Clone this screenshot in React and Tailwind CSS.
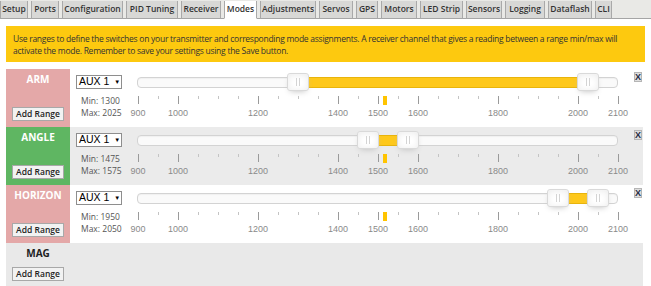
import React from 'react';

const tabs = [
  { name: 'Setup', w: 'w-[28px]' },
  { name: 'Ports', w: 'w-[28px]' },
  { name: 'Configuration', w: 'w-[61px]' },
  { name: 'PID Tuning', w: 'w-[52px]' },
  { name: 'Receiver', w: 'w-[40px]' },
  { name: 'Modes', w: 'w-[33px]', active: true },
  { name: 'Adjustments', w: 'w-[56px]' },
  { name: 'Servos', w: 'w-[34px]' },
  { name: 'GPS', w: 'w-[22px]' },
  { name: 'Motors', w: 'w-[36px]' },
  { name: 'LED Strip', w: 'w-[43px]' },
  { name: 'Sensors', w: 'w-[36px]' },
  { name: 'Logging', w: 'w-[40px]' },
  { name: 'Dataflash', w: 'w-[44px]' },
  { name: 'CLI', w: 'w-[17px]' },
];

const modes = [
  { name: 'ARM', color: 'bg-[#e4a8a8] text-white', rowBg: 'bg-white', min: 1300, max: 2025 },
  { name: 'ANGLE', color: 'bg-[#5fb662] text-white', rowBg: 'bg-[#ebebeb]', min: 1475, max: 1575 },
  { name: 'HORIZON', color: 'bg-[#e4a8a8] text-white', rowBg: 'bg-white', min: 1950, max: 2050 },
];

const majors = [900, 1000, 1200, 1400, 1500, 1600, 1800, 2000, 2100];
const ticks = [];
for (let v = 900; v <= 2100; v += 50) ticks.push(v);

// 900 -> 1px, 0.4px per unit
const pos = v => 1 + (v - 900) * 0.4;

const Handle = ({ value }) => (
  <div
    className="absolute top-[4px] w-[22px] h-[18px] bg-white border border-[#d9d9d9] rounded-[3px] shadow-[inset_0_0_1px_#fff,inset_0_1px_7px_#ebebeb,0_3px_6px_-3px_#bbb] flex items-center justify-center gap-[2px]"
    style={{ left: pos(value) - 11 }}
  >
    <span className="w-px h-[8px] bg-[#d4d4d4]" />
    <span className="w-px h-[8px] bg-[#d4d4d4]" />
  </div>
);

const RangeSlider = ({ min, max }) => (
  <div className="relative w-[481px] h-[56px] shrink-0">
    <div className="absolute left-0 right-0 top-[8px] h-[11px] bg-[#fafafa] border border-[#d3d3d3] rounded-[4px] shadow-[inset_0_1px_1px_#f0f0f0]" />
    <div
      className="absolute top-[8px] h-[11px] bg-[#fec81b] border-y border-[#e8b40c]"
      style={{ left: pos(min), width: pos(max) - pos(min) }}
    />
    <Handle value={min} />
    <Handle value={max} />
    {ticks.map(v => {
      const major = majors.includes(v);
      return (
        <div
          key={v}
          className={major ? 'absolute top-[27px] w-px h-[8px] bg-[#9a9a9a]' : 'absolute top-[27px] w-px h-[3px] bg-[#c4c4c4]'}
          style={{ left: pos(v) - 0.5 }}
        />
      );
    })}
    <div className="absolute top-[27px] left-[246px] w-[4px] h-[9px] bg-[#ffc400]" />
    {majors.map(v => (
      <div
        key={v}
        className="absolute top-[39px] w-[30px] -ml-[15px] text-center text-[9px] leading-[11px] text-[#8a8a8a] font-['Liberation_Sans',sans-serif]"
        style={{ left: pos(v) }}
      >
        {v}
      </div>
    ))}
  </div>
);

const AddRange = ({ className = '' }) => (
  <button className={`block w-[52px] h-[14px] bg-[#f2f2f2] border border-[#a8a8a8] text-[8.5px] leading-[12px] font-semibold text-[#222] ${className}`}>
    Add Range
  </button>
);

const ModeRow = ({ mode }) => (
  <div className={`flex h-[58px] ${mode.rowBg}`}>
    <div className={`w-[64px] shrink-0 flex flex-col items-center justify-between pt-[4px] pb-[6px] ${mode.color}`}>
      <div className="text-[10px] leading-[12px] font-bold">{mode.name}</div>
      <AddRange />
    </div>
    <div className="flex flex-1">
      <div className="w-[46px] ml-[6px] mr-[15px] pt-[6px] flex flex-col shrink-0">
        <div className="h-[14px] w-[46px] bg-white border border-[#8e8e8e] flex items-center pl-[2px] text-[10.5px] text-black font-['Liberation_Sans',sans-serif]">
          AUX 1<span className="ml-[5px] text-[6px]">▼</span>
        </div>
        <div className="mt-[6px] pl-[5px] text-[8.5px] leading-[12px] text-[#555]">
          <div>Min: {mode.min}</div>
          <div>Max: {mode.max}</div>
        </div>
      </div>
      <RangeSlider min={mode.min} max={mode.max} />
      <div className="ml-[16px] mt-[3px] w-[8px] h-[10px] bg-[#dedede] border border-[#b5b5b5] flex items-center justify-center text-[9px] leading-none font-bold text-[#1f2a44] font-['Liberation_Sans',sans-serif]">
        X
      </div>
    </div>
  </div>
);

export default function App() {
  return (
    <div className="w-[651px] h-[286px] overflow-hidden bg-white font-['Open_Sans',sans-serif]">
      <div className="h-[19px] bg-[#e9e9e6] border-b border-[#a5a5a5] flex items-end gap-[3px]">
        {tabs.map(t => (
          <div
            key={t.name}
            className={`${t.w} shrink-0 h-[18px] -mb-px flex items-center justify-center whitespace-nowrap text-[8.5px] font-semibold text-[#333] border-x border-[#a9a9a9] ${t.active ? 'bg-white border-b border-b-white' : 'bg-[#d8d8d6] border-b border-b-[#a5a5a5]'}`}
          >
            {t.name}
          </div>
        ))}
      </div>

      <div className="mx-[6px] mt-[7px] h-[36px] bg-[#fdc90f] pl-[7px] pt-[7px] text-[8.5px] leading-[12px] tracking-[-0.26px] whitespace-nowrap text-[#333]">
        Use ranges to define the switches on your transmitter and corresponding mode assignments. A receiver channel that gives a reading between a range min/max will
        <br />
        activate the mode. Remember to save your settings using the Save button.
      </div>

      <div className="mx-[6px] mt-[7px] w-[637px]">
        {modes.map(m => (
          <ModeRow key={m.name} mode={m} />
        ))}
        <div className="flex h-[50px] bg-[#e9e9e9]">
          <div className="w-[64px] shrink-0 flex flex-col items-center pt-[4px]">
            <div className="text-[10px] leading-[12px] font-bold text-[#222]">MAG</div>
            <AddRange className="mt-[8px]" />
          </div>
        </div>
      </div>
    </div>
  );
}
